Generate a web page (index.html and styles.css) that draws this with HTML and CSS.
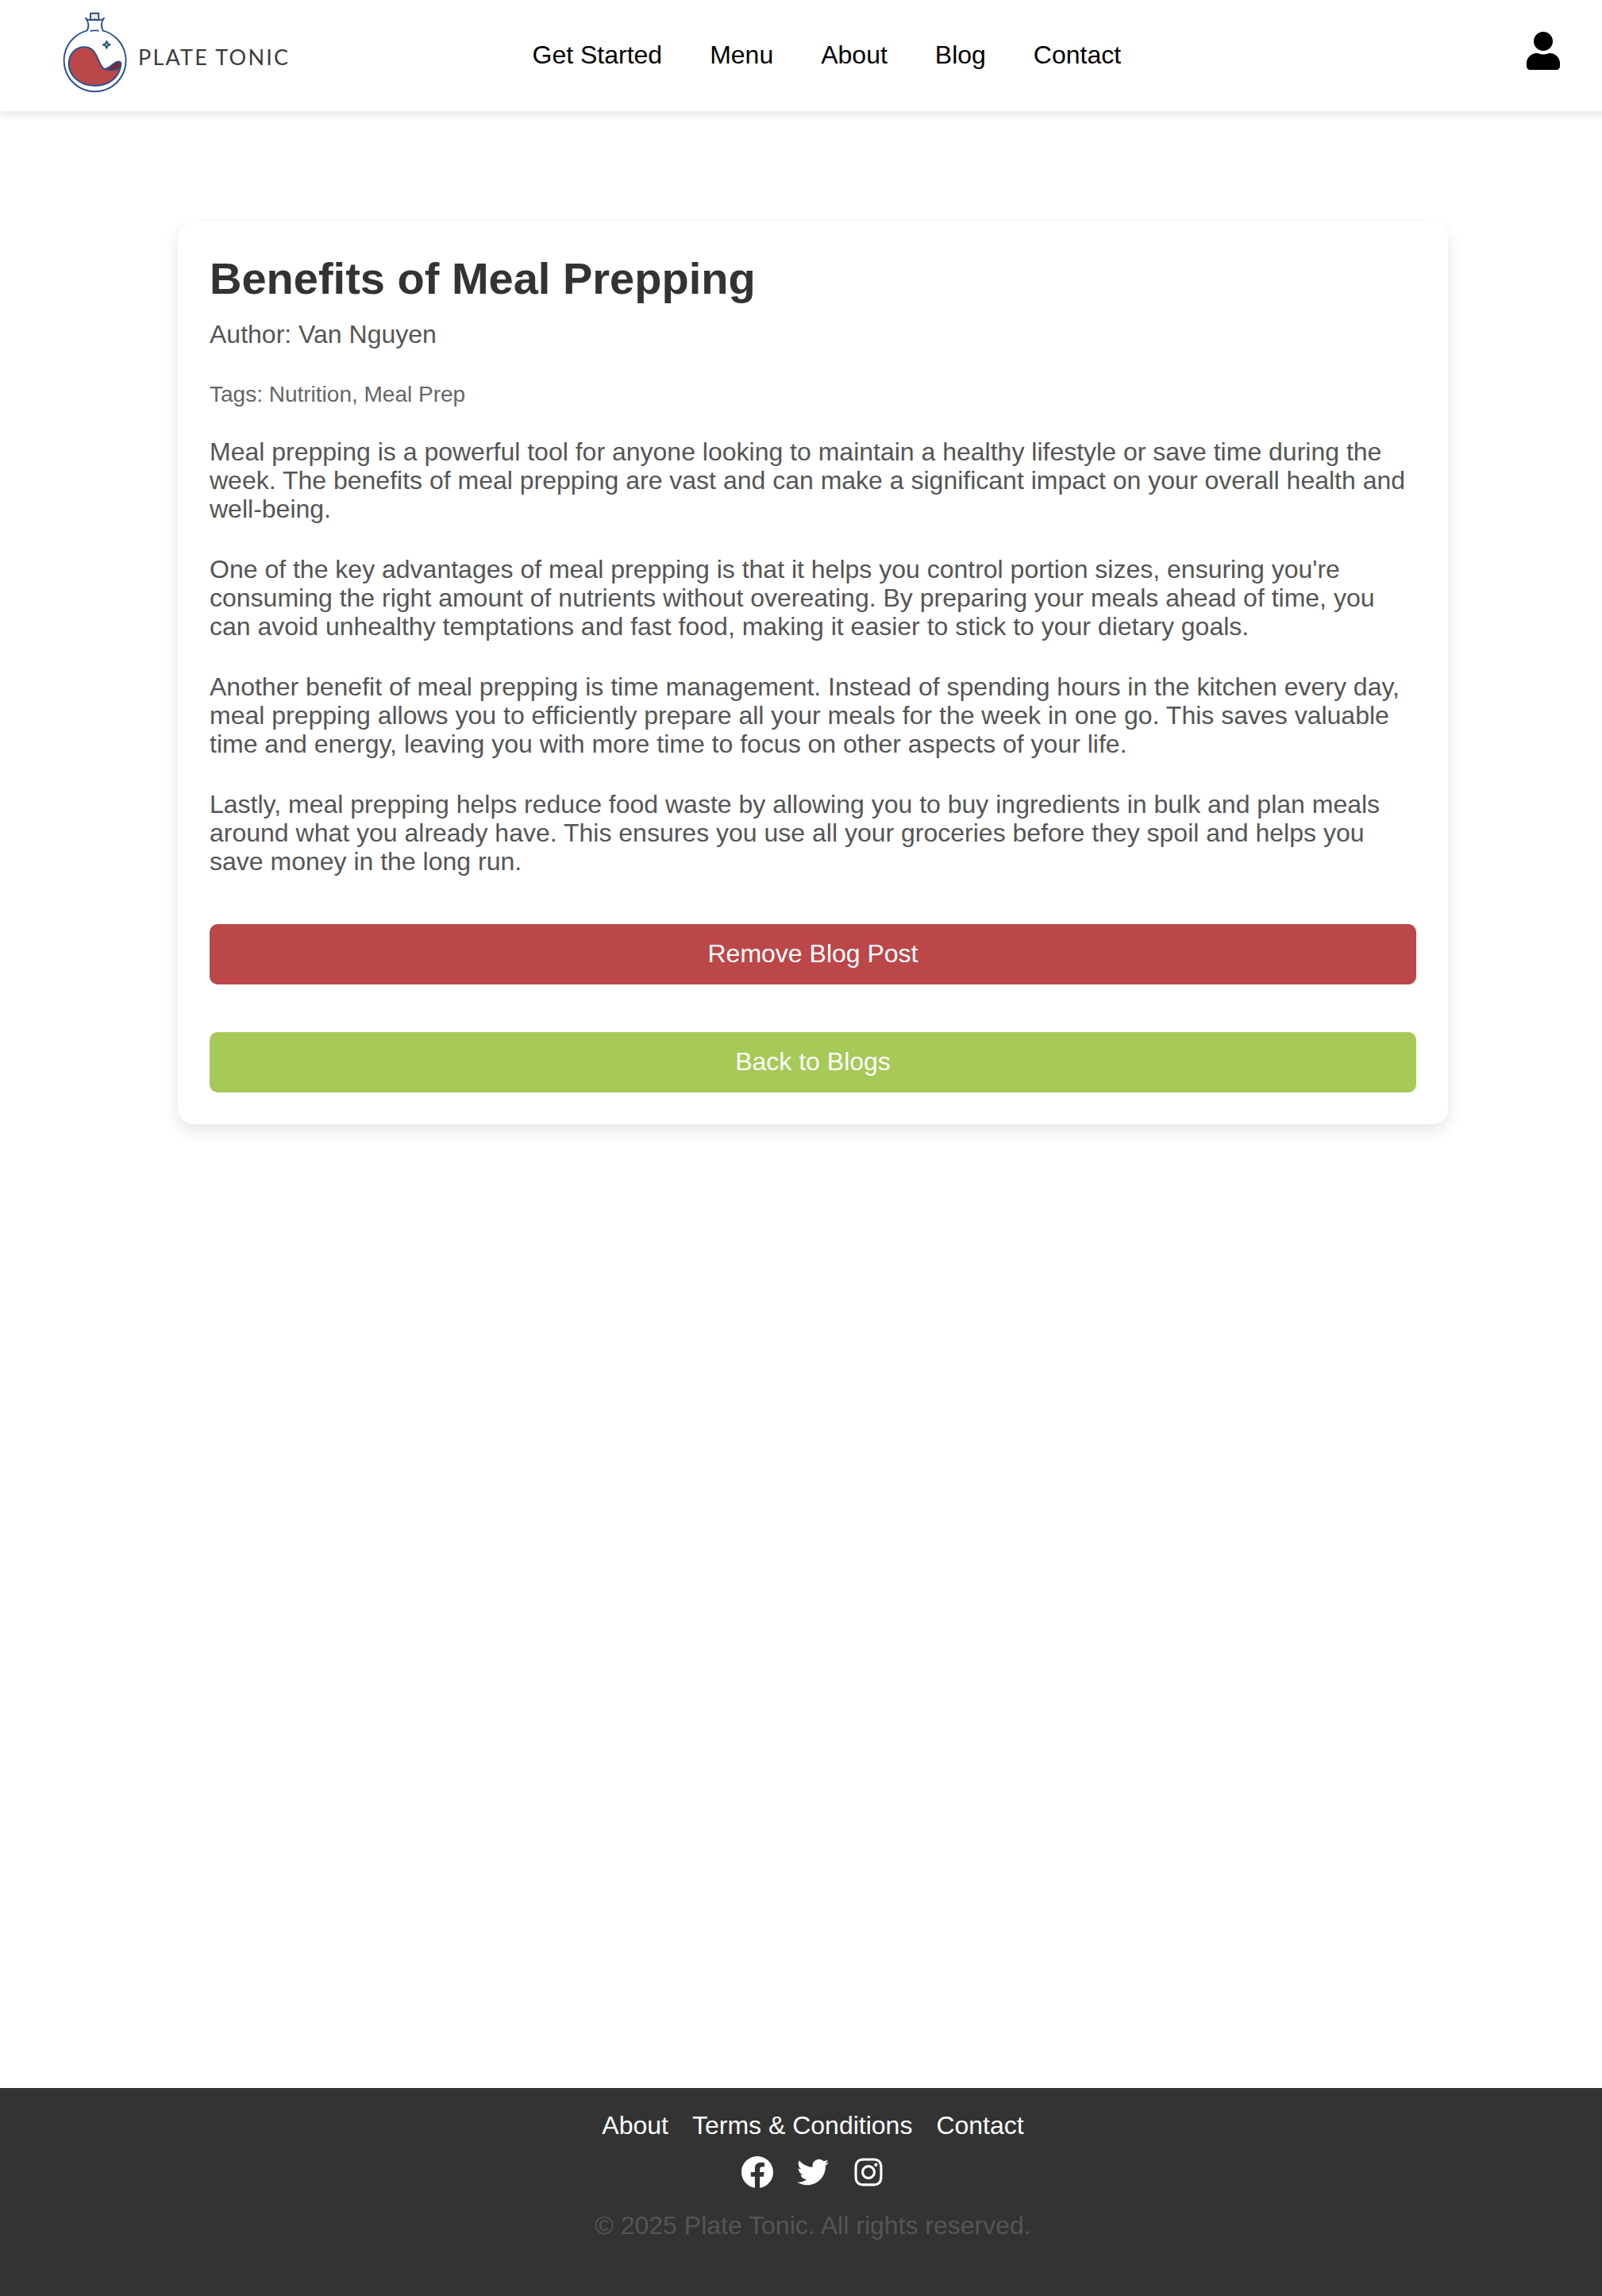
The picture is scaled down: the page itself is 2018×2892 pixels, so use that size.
FILE: index.html
```html
<!DOCTYPE html>
<html lang="en">
<head>
<meta charset="utf-8">
<title>Benefits of Meal Prepping</title>
<link rel="stylesheet" href="styles.css">
</head>
<body>
<div class="page">
  <header class="header">
    <a class="logo">
      <svg class="logo-mark" viewBox="0 0 84 104" fill="none" stroke="#28508f" stroke-width="1.900" stroke-linecap="round" stroke-linejoin="round">
        <path d="M36 11V2.700H46.300V11Z" fill="#f3e8d2"/>
        <path d="M30 8.700C31.500 11 33.500 11.300 36 10.800C38 11.500 40 11.200 41.200 10.200C42.500 11.200 44.500 11.500 46.300 10.800C49 11.300 51.500 11 53 8.700C49 14 49.500 20 51.700 24.600A39 39 0 1 1 31.500 24.600C34 20 34 14 30 8.700Z"/>
        <path d="M36.300 24.900C39 24.300 43 24.300 46 24.600"/>
        <path d="M8.700 66C9 53 18 45.300 28 45.300C46 45.300 44 67 53.500 73C59 73 63 67 69 64.200C73 62.700 75 64.500 74.300 68C72 84 59 94 41.500 94C22 94 8.500 81 8.700 66Z" fill="#bc4749"/>
        <path d="M53.500 73C59 73 63 67 69 64.200C73 62.700 75 64.500 74 68C72 75 62 75.500 53.500 73Z" fill="#7b2830"/>
        <path d="M56.300 37.800L57.700 40.900L60.800 42.300L57.700 43.700L56.300 46.800L54.900 43.700L51.800 42.300L54.900 40.900Z" fill="#a7c957"/>
      </svg>
      <span class="logo-text">PLATE TONIC</span>
    </a>
    <nav class="nav"><a>Get Started</a><a>Menu</a><a>About</a><a>Blog</a><a>Contact</a></nav>
    <a class="user"><svg viewBox="0 0 448 512"><path d="M224 256c70.700 0 128-57.300 128-128S294.700 0 224 0 96 57.300 96 128s57.300 128 128 128zm89.600 32h-16.700c-22.200 10.200-46.900 16-72.900 16s-50.600-5.800-72.900-16h-16.700C60.200 288 0 348.200 0 422.400V464c0 26.500 21.500 48 48 48h352c26.500 0 48-21.500 48-48v-41.600c0-74.200-60.200-134.400-134.400-134.400z"/></svg></a>
  </header>
  <main class="main">
    <article class="card">
      <h1 class="title">Benefits of Meal Prepping</h1>
      <p class="author">Author: Van Nguyen</p>
      <p class="tags">Tags: Nutrition, Meal Prep</p>
      <div class="content">
        <p>Meal prepping is a powerful tool for anyone looking to maintain a healthy lifestyle or save time during the week. The benefits of meal prepping are vast and can make a significant impact on your overall health and well-being.</p>
        <p>One of the key advantages of meal prepping is that it helps you control portion sizes, ensuring you're consuming the right amount of nutrients without overeating. By preparing your meals ahead of time, you can avoid unhealthy temptations and fast food, making it easier to stick to your dietary goals.</p>
        <p>Another benefit of meal prepping is time management. Instead of spending hours in the kitchen every day, meal prepping allows you to efficiently prepare all your meals for the week in one go. This saves valuable time and energy, leaving you with more time to focus on other aspects of your life.</p>
        <p>Lastly, meal prepping helps reduce food waste by allowing you to buy ingredients in bulk and plan meals around what you already have. This ensures you use all your groceries before they spoil and helps you save money in the long run.</p>
      </div>
      <div class="actions">
        <button class="button remove">Remove Blog Post</button>
        <button class="button back">Back to Blogs</button>
      </div>
    </article>
  </main>
  <footer class="footer">
    <nav class="footer-links"><a>About</a><a>Terms &amp; Conditions</a><a>Contact</a></nav>
    <div class="social">
      <svg viewBox="2 2.040 20 20"><path d="M12 2.040C6.500 2.040 2 6.530 2 12.060C2 17.060 5.660 21.210 10.440 21.960V14.960H7.900V12.060H10.440V9.850C10.440 7.340 11.930 5.960 14.220 5.960C15.310 5.960 16.450 6.150 16.450 6.150V8.620H15.190C13.950 8.620 13.560 9.390 13.560 10.180V12.060H16.340L15.890 14.960H13.560V21.960A10 10 0 0 0 22 12.060C22 6.530 17.500 2.040 12 2.040Z"/></svg>
      <svg viewBox="0 0 512 512"><path d="M459.370 151.716c.325 4.548.325 9.097.325 13.645 0 138.720-105.583 298.558-298.558 298.558-59.452 0-114.680-17.219-161.137-47.106 8.447.974 16.568 1.299 25.340 1.299 49.055 0 94.213-16.568 130.274-44.832-46.132-.975-84.792-31.188-98.112-72.772 6.498.974 12.995 1.624 19.818 1.624 9.421 0 18.843-1.300 27.614-3.573-48.081-9.747-84.143-51.980-84.143-102.985v-1.299c13.969 7.797 30.214 12.670 47.431 13.319-28.264-18.843-46.781-51.005-46.781-87.391 0-19.492 5.197-37.360 14.294-52.954 51.655 63.675 129.300 105.258 216.365 109.807-1.624-7.797-2.599-15.918-2.599-24.040 0-57.828 46.782-104.934 104.934-104.934 30.213 0 57.502 12.670 76.670 33.137 23.715-4.548 46.456-13.320 66.599-25.340-7.798 24.366-24.366 44.833-46.132 57.827 21.117-2.273 41.584-8.122 60.426-16.243-14.292 20.791-32.161 39.308-52.628 54.253z"/></svg>
      <svg viewBox="0 0 448 512"><path d="M224.100 141c-63.600 0-114.900 51.300-114.900 114.900s51.300 114.900 114.900 114.900S339 319.500 339 255.900 287.700 141 224.100 141zm0 189.600c-41.100 0-74.700-33.500-74.700-74.700s33.500-74.700 74.700-74.700 74.700 33.500 74.700 74.700-33.600 74.700-74.700 74.700zm146.400-194.300c0 14.900-12 26.800-26.800 26.800-14.900 0-26.800-12-26.800-26.800s12-26.800 26.800-26.800 26.800 12 26.800 26.800zm76.100 27.200c-1.700-35.900-9.900-67.700-36.200-93.900-26.200-26.200-58-34.400-93.900-36.200-37-2.100-147.900-2.100-184.900 0-35.800 1.700-67.600 9.900-93.900 36.100s-34.400 58-36.200 93.900c-2.100 37-2.100 147.900 0 184.900 1.700 35.900 9.900 67.700 36.200 93.900s58 34.400 93.900 36.200c37 2.100 147.900 2.100 184.900 0 35.900-1.700 67.700-9.900 93.900-36.200 26.200-26.200 34.400-58 36.200-93.900 2.100-37 2.100-147.800 0-184.800zM398.800 388c-7.800 19.600-22.900 34.700-42.600 42.600-29.500 11.700-99.500 9-132.100 9s-102.700 2.600-132.100-9c-19.600-7.800-34.700-22.900-42.600-42.600-11.700-29.500-9-99.500-9-132.100s-2.600-102.700 9-132.100c7.800-19.600 22.900-34.700 42.600-42.600 29.500-11.700 99.500-9 132.100-9s102.700-2.600 132.100 9c19.600 7.800 34.700 22.900 42.600 42.600 11.700 29.500 9 99.500 9 132.100s2.700 102.700-9 132.100z"/></svg>
    </div>
    <p class="copyright">© 2025 Plate Tonic. All rights reserved.</p>
  </footer>
</div>
</body>
</html>
```
FILE: styles.css
```css
* { box-sizing: border-box; margin: 0; padding: 0; }
html { overflow: hidden; }
body {
  overflow: hidden;
  background: #fff;
  color: #555;
  font: 32px/36px "Liberation Sans", Arial, sans-serif;
}
.page { width: 2048px; height: 2892px; display: flex; flex-direction: column; }
.header {
  height: 140px;
  flex: none;
  display: flex;
  align-items: flex-start;
  background: #fff;
  box-shadow: 0 4px 10px rgba(0, 0, 0, .1);
}
.logo { width: 670.5px; height: 140px; padding: 14px 0 0 78px; display: flex; }
.logo-mark { width: 84px; height: 104px; flex: none; }
.logo-text {
  padding: 40px 0 0 12px;
  color: #3b3b3b;
  font: 27px/36px Lato, sans-serif;
  letter-spacing: 2.2px;
  white-space: nowrap;
}
.nav { flex: 1; display: flex; gap: 60px; padding-top: 51px; color: #000; }
.user { margin-right: 83px; padding-top: 40px; }
.user svg { display: block; width: 42px; height: 48px; }
.main { flex: 1; padding-top: 140px; }
.card {
  width: 1600px;
  margin: 0 auto;
  padding: 39px 40px 40px;
  border-radius: 20px;
  background: #fff;
  box-shadow: 0 8px 20px rgba(0, 0, 0, .1);
}
.title { color: #333; font-size: 56px; line-height: 64px; }
.author { margin-top: 20px; }
.tags { margin-top: 42px; color: #666; font-size: 28px; line-height: 32px; }
.content { margin-top: 38px; display: grid; gap: 40px; }
.actions { margin-top: 61px; display: grid; gap: 60px; }
.button {
  height: 76px;
  padding-bottom: 2px;
  border: 0;
  border-radius: 10px;
  color: #fff;
  font: inherit;
}
.remove { background: #bc4749; }
.back { background: #a7c957; }
.footer {
  height: 262px;
  flex: none;
  padding-top: 29px;
  display: flex;
  flex-direction: column;
  align-items: center;
  background: #333;
  color: #fff;
}
.footer-links { display: flex; gap: 30px; }
.social { display: flex; gap: 30px; margin-top: 21px; }
.social svg { display: block; width: 40px; height: 40px; fill: #fff; }
.copyright { margin-top: 29px; color: #555; }
```
